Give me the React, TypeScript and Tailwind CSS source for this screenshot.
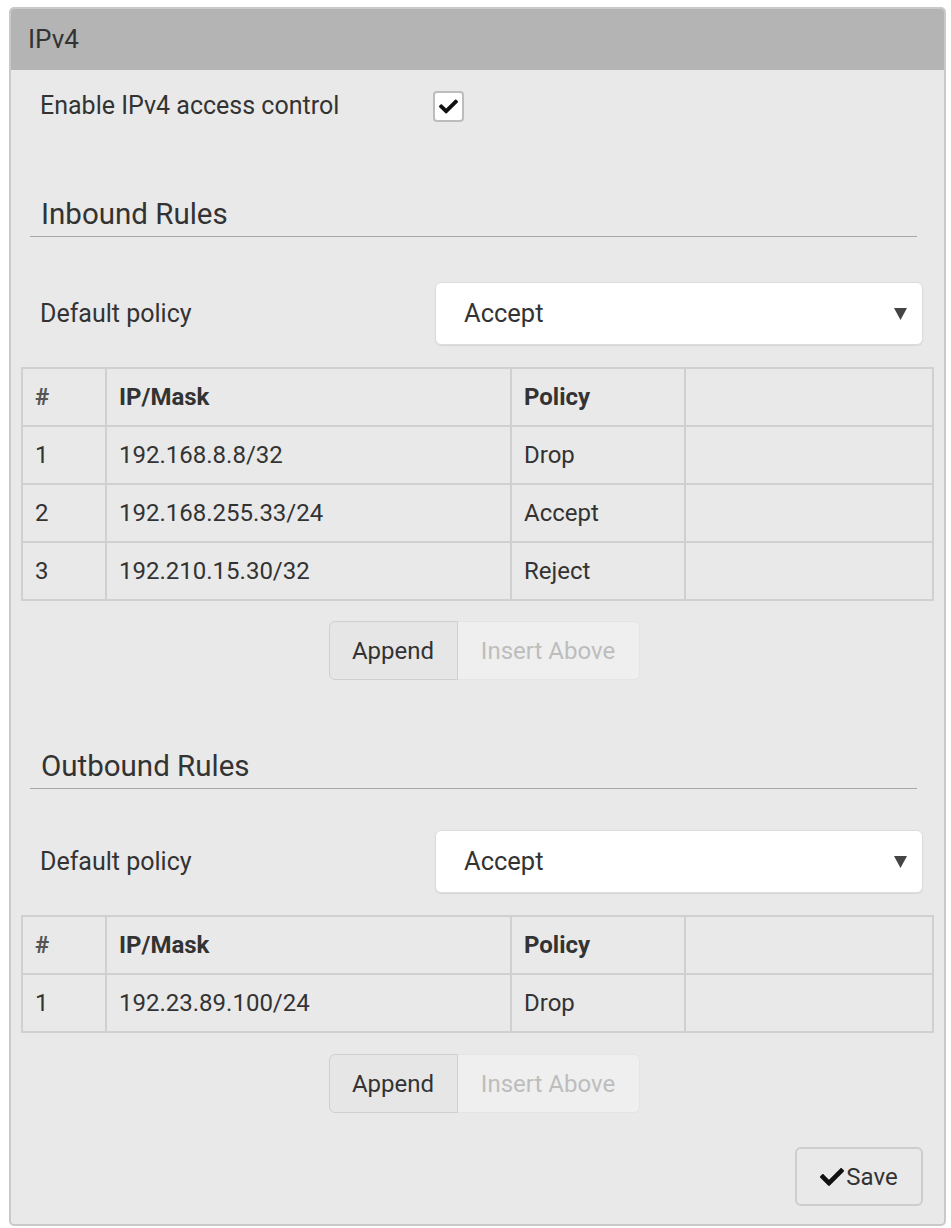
import React from 'react';
import { FaCheck } from 'react-icons/fa';

type Rule = {
  ip: string;
  policy: string;
};

const inboundRules: Rule[] = [
  { ip: '192.168.8.8/32', policy: 'Drop' },
  { ip: '192.168.255.33/24', policy: 'Accept' },
  { ip: '192.210.15.30/32', policy: 'Reject' },
];

const outboundRules: Rule[] = [{ ip: '192.23.89.100/24', policy: 'Drop' }];

const Heading = ({ title, className }: { title: string; className: string }) => (
  <div className={`ml-[9px] mr-[17px] border-b border-[#a8a8a8] pl-[11px] pb-[4px] ${className}`}>
    <div className="h-[36px] text-[29.5px] leading-[36px] text-[#333]">{title}</div>
  </div>
);

const PolicyRow = ({ className }: { className: string }) => (
  <div className={`flex items-center justify-between ${className}`}>
    <span className="pl-[19px] text-[25px] text-[#333]">Default policy</span>
    <div className="mr-[11px] flex h-[63px] w-[488px] items-center justify-between rounded-[6px] border border-[#dcdcdc] bg-white pl-[28px] pr-[15px] shadow-[0_1px_1px_rgba(0,0,0,0.08)]">
      <span className="text-[25.5px] text-[#333]">Accept</span>
      <svg width="13" height="13" viewBox="0 0 13 13">
        <path d="M0 1 L13 1 L6.5 13 Z" fill="#444" />
      </svg>
    </div>
  </div>
);

const RulesTable = ({ rules, className }: { rules: Rule[]; className: string }) => (
  <table className={`w-full border-collapse text-[24px] text-[#333] ${className}`}>
    <thead>
      <tr className="h-[58px]">
        <th className="w-[84px] border-2 border-[#d0d0d0] pl-[12px] text-left font-bold text-[#555]">#</th>
        <th className="w-[405px] border-2 border-[#d0d0d0] pl-[12px] text-left font-bold">IP/Mask</th>
        <th className="w-[174px] border-2 border-[#d0d0d0] pl-[12px] text-left font-bold">Policy</th>
        <th className="border-2 border-[#d0d0d0]"></th>
      </tr>
    </thead>
    <tbody>
      {rules.map((rule, index) => (
        <tr key={index} className="h-[58px]">
          <td className="border-2 border-[#d0d0d0] pl-[12px]">{index + 1}</td>
          <td className="border-2 border-[#d0d0d0] pl-[12px]">{rule.ip}</td>
          <td className="border-2 border-[#d0d0d0] pl-[12px]">{rule.policy}</td>
          <td className="border-2 border-[#d0d0d0]"></td>
        </tr>
      ))}
    </tbody>
  </table>
);

const RuleButtons = ({ className }: { className: string }) => (
  <div className={`flex justify-center pl-[13px] ${className}`}>
    <button className="h-[59px] w-[129px] rounded-l-[6px] border border-[#cfcfcf] bg-[#e6e6e6] text-[24px] text-[#333]">
      Append
    </button>
    <button
      disabled
      className="h-[59px] w-[182px] rounded-r-[6px] border border-l-0 border-[#e4e4e4] bg-[#efefef] text-[24px] text-[#bdbdbd]"
    >
      Insert Above
    </button>
  </div>
);

export default function App() {
  return (
    <div className="min-h-screen bg-white pl-[9px] pt-[7px] font-['Roboto',sans-serif]">
      <div className="w-[937px] overflow-hidden rounded-[5px] border-2 border-[#c9c9c9] bg-[#e9e9e9]">
        <div className="flex h-[61px] items-center bg-[#b4b4b4] pl-[17px]">
          <span className="text-[26px] text-[#333]">IPv4</span>
        </div>

        <div className="flex flex-col px-[10px] pb-[18px]">
          <div className="mt-[20px] flex h-[32px] items-center">
            <span className="w-[412px] pl-[19px] text-[25px] text-[#333]">Enable IPv4 access control</span>
            <span className="flex h-[31px] w-[31px] items-center justify-center rounded-[4px] border-2 border-[#bdbdbd] bg-white">
              <FaCheck className="text-[19px] text-[#111]" />
            </span>
          </div>

          <Heading title="Inbound Rules" className="mt-[74px]" />
          <PolicyRow className="mt-[45px]" />
          <RulesTable rules={inboundRules} className="mt-[22px]" />
          <RuleButtons className="mt-[20px]" />

          <Heading title="Outbound Rules" className="mt-[68px]" />
          <PolicyRow className="mt-[41px]" />
          <RulesTable rules={outboundRules} className="mt-[22px]" />
          <RuleButtons className="mt-[21px]" />

          <div className="mt-[34px] flex justify-end pr-[11px]">
            <button className="flex h-[59px] w-[128px] items-center justify-center gap-[2px] rounded-[6px] border-2 border-[#cdcdcd] bg-[#e9e9e9] text-[24px] text-[#333]">
              <FaCheck className="text-[24px] text-[#111]" />
              Save
            </button>
          </div>
        </div>
      </div>
    </div>
  );
}
